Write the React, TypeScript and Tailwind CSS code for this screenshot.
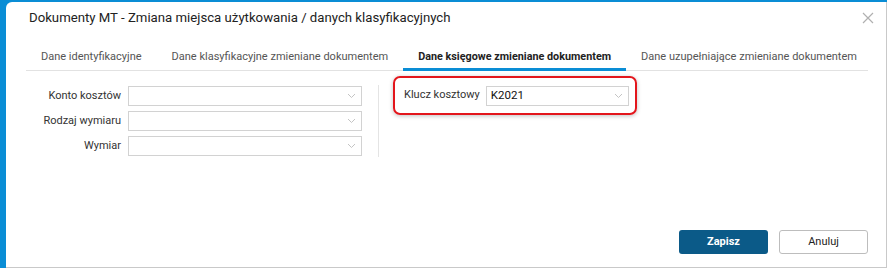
import React from "react";

const TABS = [
  "Dane identyfikacyjne",
  "Dane klasyfikacyjne zmieniane dokumentem",
  "Dane księgowe zmieniane dokumentem",
  "Dane uzupełniające zmieniane dokumentem",
];

const ACTIVE = 2;

function Chevron() {
  return (
    <svg width="9" height="6" viewBox="0 0 9 6" className="shrink-0">
      <path d="M1 1 L4.5 4.5 L8 1" fill="none" stroke="#c4c4c4" strokeWidth="1" />
    </svg>
  );
}

function Select({ value, width }: { value?: string; width: string }) {
  return (
    <div className={`flex items-center h-[20px] border border-[#d2d2d2] bg-white pl-[4px] pr-[5px] ${width}`}>
      <span className="flex-1 text-[11.5px] text-[#111] leading-none">{value}</span>
      <Chevron />
    </div>
  );
}

const FIELDS = ["Konto kosztów", "Rodzaj wymiaru", "Wymiar"];

export default function App() {
  return (
    <div className="w-[889px] h-[270px] bg-white font-['Roboto',sans-serif] overflow-hidden">
      <div className="w-[887px] h-[268px] bg-[#0a8dd5] pl-[6px] pt-[2px] flex">
        <div className="flex-1 min-w-0 flex flex-col bg-white rounded-tl-[6px] border-r border-b border-[#c9c9c9]">
          {/* Title */}
          <div className="flex items-center h-[32px] pl-[23px] pr-[12px]">
            <span className="flex-1 text-[13.2px] text-[#222]">
              Dokumenty MT - Zmiana miejsca użytkowania / danych klasyfikacyjnych
            </span>
            <svg width="12" height="12" viewBox="0 0 12 12">
              <path d="M1 1 L11 11 M11 1 L1 11" stroke="#b0b0b0" strokeWidth="1.2" />
            </svg>
          </div>

          {/* Tabs */}
          <div className="mt-[15px] ml-[20px] mr-[18px] flex border-b border-[#e2e2e2]">
            {TABS.map((t, i) => (
              <div
                key={t}
                className={`px-[15px] pb-[3px] leading-[16px] whitespace-nowrap border-b-[3px] -mb-px ${
                  i === ACTIVE
                    ? "border-[#0a8dd5] font-bold text-[#222] text-[10.8px]"
                    : "border-transparent text-[#555] text-[11px]"
                }`}
              >
                {t}
              </div>
            ))}
          </div>

          {/* Form */}
          <div className="flex items-start pt-[5px] ml-[20px]">
            <div className="mt-[10px] flex flex-col gap-[5px]">
              {FIELDS.map((f) => (
                <div key={f} className="flex items-center gap-[7px]">
                  <span className="w-[95px] text-right text-[11px] text-[#333]">{f}</span>
                  <Select width="w-[234px]" />
                </div>
              ))}
            </div>
            <div className="mt-[9px] ml-[16px] w-px h-[72px] bg-[#e4e4e4]" />
            <div className="ml-[14px] flex items-center gap-[6px] h-[39px] pl-[9px] pr-[6px] border-2 border-[#e3161c] rounded-[7px] shadow-[0_1px_4px_rgba(0,0,0,0.25)]">
              <span className="text-[11px] text-[#333]">Klucz kosztowy</span>
              <Select width="w-[143px]" value="K2021" />
            </div>
          </div>

          {/* Footer */}
          <div className="mt-auto mb-[13px] mr-[18px] flex justify-end gap-[11px]">
            <button className="w-[89px] h-[24px] rounded-[3px] bg-[#0b5a88] text-white text-[11px] font-bold">
              Zapisz
            </button>
            <button className="w-[89px] h-[24px] rounded-[3px] bg-white border border-[#bdbdbd] text-[#222] text-[11px]">
              Anuluj
            </button>
          </div>
        </div>
      </div>
    </div>
  );
}
